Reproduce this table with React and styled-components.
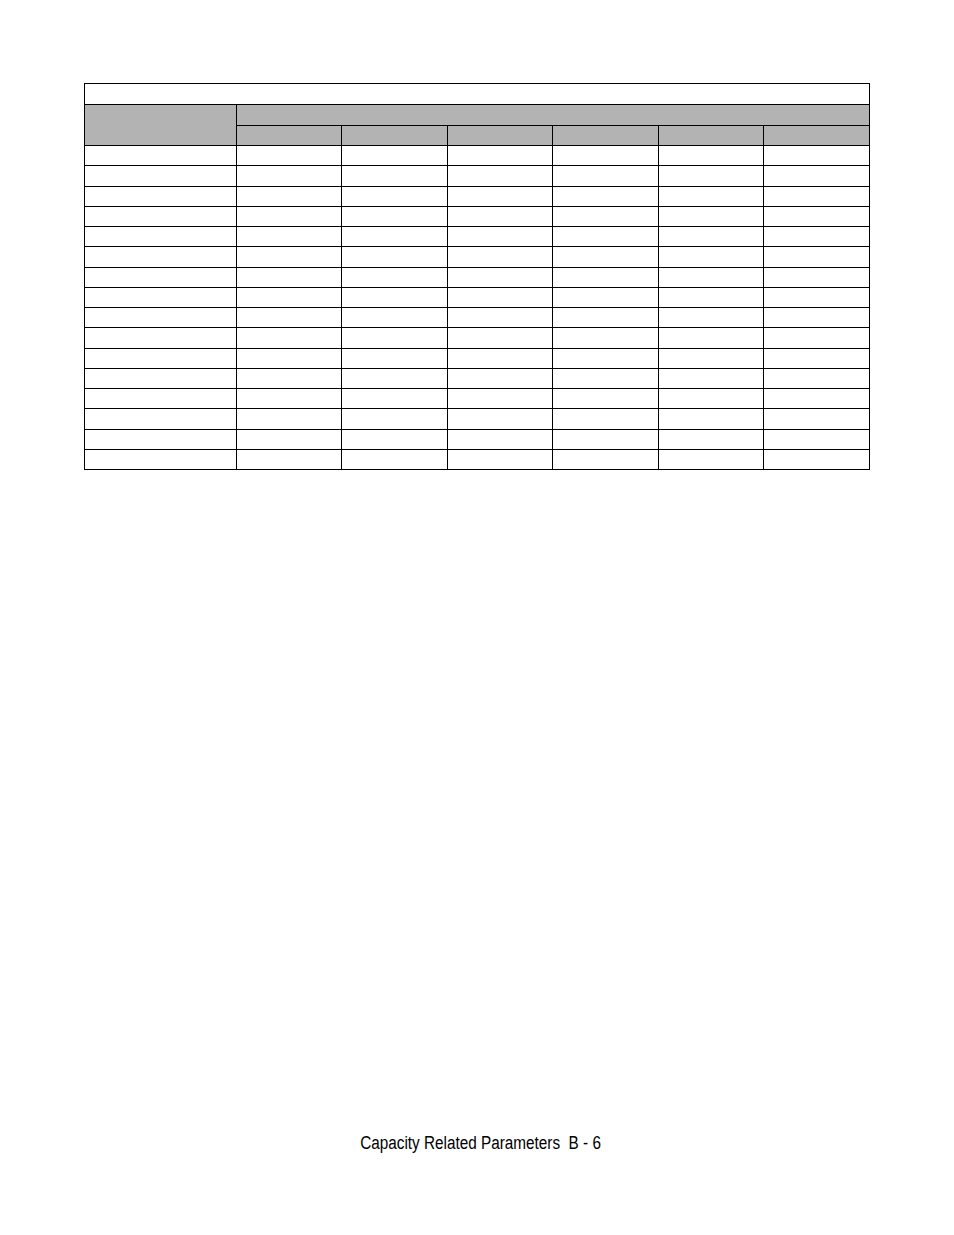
import React from 'react';
import styled, { createGlobalStyle } from 'styled-components';

const GlobalStyle = createGlobalStyle`
    html, body {
        margin: 0;
        padding: 0;
        background: #ffffff;
    }
    body {
        font-family: "Liberation Sans", Arial, sans-serif;
        color: #000;
    }
`;

const Page = styled.div`
    width: 954px;
    height: 1235px;
    box-sizing: border-box;
    padding: 83px 0 0 84px;
    display: flex;
    flex-direction: column;
`;

// black grid background + 1px gaps draws the ruling lines
const Grid = styled.div`
    display: grid;
    width: 786px;
    box-sizing: border-box;
    grid-template-columns: 151px 104px 105px 104px 105px 104px 105px;
    grid-template-rows: ${(p) => p.$rows};
    gap: 1px;
    padding: 1px;
    background: #000;
`;

const Cell = styled.div`
    background: ${(p) => (p.$shade ? '#b3b3b3' : '#ffffff')};
    grid-column: ${(p) => p.$col || 'auto'};
    grid-row: ${(p) => p.$row || 'auto'};
`;

const Footer = styled.div`
    margin-top: 663px;
    width: 786px;
    padding-left: 8px;
    box-sizing: border-box;
    text-align: center;
    font-size: 18px;
    line-height: 20px;
    white-space: pre;
`;

const Narrow = styled.span`
    display: inline-block;
    transform: scaleX(0.85);
    transform-origin: center;
`;

const dataHeights = [19, 20, 19, 19, 19, 20, 19, 19, 19, 20, 19, 19, 19, 20, 19, 19];
const headRows = [20, 20, 19];

const App = () => {
    const rows = [...headRows, ...dataHeights].map((h) => `${h}px`).join(' ');

    return (
        <>
            <GlobalStyle />
            <Page>
                <Grid $rows={rows}>
                    <Cell $col="1 / 8" />
                    <Cell $shade $col="1" $row="2 / 4" />
                    <Cell $shade $col="2 / 8" $row="2" />
                    {[0, 1, 2, 3, 4, 5].map((i) => (
                        <Cell key={'sub' + i} $shade />
                    ))}
                    {dataHeights.map((_, r) =>
                        [0, 1, 2, 3, 4, 5, 6].map((c) => <Cell key={r + '-' + c} />)
                    )}
                </Grid>
                <Footer>
                    <Narrow>{'Capacity Related Parameters  B - 6'}</Narrow>
                </Footer>
            </Page>
        </>
    );
};

export default App;
